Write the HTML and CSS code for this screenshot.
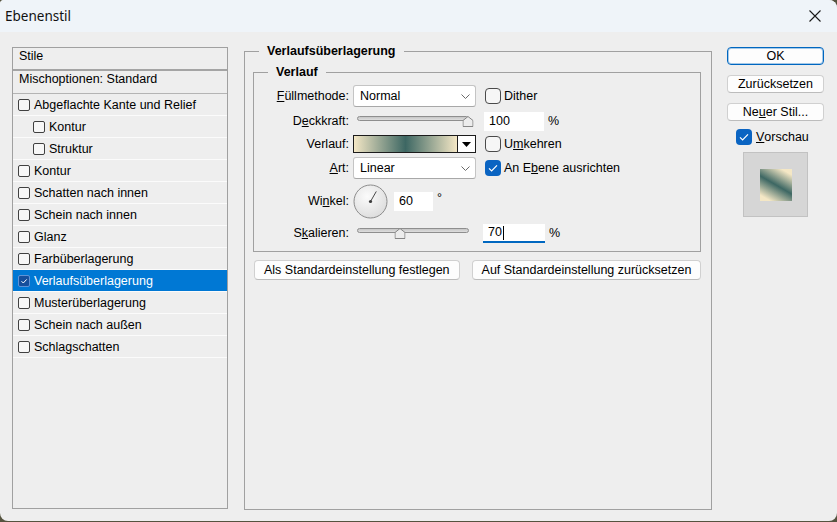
FILE: index.html
```html
<!DOCTYPE html>
<html lang="de">
<head>
<meta charset="UTF-8">
<meta name="viewport" content="width=device-width, initial-scale=1.0">
<title>Ebenenstil</title>
<link rel="stylesheet" href="styles.css">
</head>
<body>

<div class="window">
    <div class="titlebar">
        <span class="title">Ebenenstil</span>
        <svg class="close" width="12" height="12" viewBox="0 0 12 12"><path d="M0.5 0.5L11.5 11.5M11.5 0.5L0.5 11.5" stroke="#1a1a1a" stroke-width="1.1" fill="none"/></svg>
    </div>

    <div class="content">
        <div class="styles">
            <div class="styles-head">Stile</div>
            <div class="styles-blend">Mischoptionen: Standard</div>
            <ul class="styles-list">
                <li><span class="cb"></span>Abgeflachte Kante und Relief</li>
                <li class="sub"><span class="cb"></span>Kontur</li>
                <li class="sub"><span class="cb"></span>Struktur</li>
                <li><span class="cb"></span>Kontur</li>
                <li><span class="cb"></span>Schatten nach innen</li>
                <li><span class="cb"></span>Schein nach innen</li>
                <li><span class="cb"></span>Glanz</li>
                <li><span class="cb"></span>Farbüberlagerung</li>
                <li class="active"><span class="cb"><svg width="10" height="10" viewBox="0 0 10 10"><path d="M2.5 5.2l1.8 1.8 3.4-3.6" stroke="#fff" stroke-width="1" fill="none"/></svg></span>Verlaufsüberlagerung</li>
                <li><span class="cb"></span>Musterüberlagerung</li>
                <li><span class="cb"></span>Schein nach außen</li>
                <li><span class="cb"></span>Schlagschatten</li>
            </ul>
        </div>

        <div class="main">
            <fieldset class="group">
                <legend>Verlaufsüberlagerung</legend>

                <fieldset class="group inner">
                    <legend>Verlauf</legend>
                    <div class="form">
                        <label><u>F</u>üllmethode:</label>
                        <div class="select">Normal
                            <svg class="chevron" width="9" height="5" viewBox="0 0 9 5"><path d="M0.5 0.5L4.5 4.5L8.5 0.5" stroke="#6a6a6a" fill="none"/></svg>
                        </div>
                        <div class="extra"><span class="check"></span>Dither</div>

                        <label>D<u>e</u>ckkraft:</label>
                        <div class="slider">
                            <div class="track"></div>
                            <svg class="thumb" style="left: 99%" width="11" height="11" viewBox="0 0 11 11"><polygon points="0.5,10.5 0.5,4.5 5.5,0.5 10.5,4.5 10.5,10.5" fill="#ececec" stroke="#858585"/></svg>
                        </div>
                        <div class="extra"><span class="field">100</span><span class="unit">%</span></div>

                        <label>Verlauf:</label>
                        <div class="gradient">
                            <div class="gradient-bar"></div>
                            <div class="gradient-drop"><svg width="9" height="5" viewBox="0 0 9 5"><polygon points="0,0 9,0 4.5,5" fill="#000"/></svg></div>
                        </div>
                        <div class="extra"><span class="check"></span>U<u>m</u>kehren</div>

                        <label><u>A</u>rt:</label>
                        <div class="select">Linear
                            <svg class="chevron" width="9" height="5" viewBox="0 0 9 5"><path d="M0.5 0.5L4.5 4.5L8.5 0.5" stroke="#6a6a6a" fill="none"/></svg>
                        </div>
                        <div class="extra"><span class="check on"><svg width="16" height="16" viewBox="0 0 16 16"><path d="M4 8.3l2.6 2.6 5.4-5.6" stroke="#fff" stroke-width="1.2" fill="none"/></svg></span>An E<u>b</u>ene ausrichten</div>

                        <label>Wi<u>n</u>kel:</label>
                        <div class="angle">
                            <svg class="dial" width="35" height="35" viewBox="0 0 35 35">
                                <defs>
                                    <radialGradient id="dialfill" cx="0.4" cy="0.35" r="0.7">
                                        <stop offset="0" stop-color="#fbfbfb"/>
                                        <stop offset="1" stop-color="#dcdcdc"/>
                                    </radialGradient>
                                </defs>
                                <circle cx="17.5" cy="17.5" r="16.5" fill="url(#dialfill)" stroke="#8c8c8c"/>
                                <line x1="17.5" y1="17.5" x2="23.3" y2="7.4" stroke="#4a4a4a" stroke-width="1"/>
                                <circle cx="17.5" cy="17.5" r="1.6" fill="#3c3c3c"/>
                            </svg>
                            <span class="field small">60</span>
                            <span class="degree">°</span>
                        </div>

                        <label>S<u>k</u>alieren:</label>
                        <div class="slider">
                            <div class="track"></div>
                            <svg class="thumb" style="left: 38%" width="11" height="11" viewBox="0 0 11 11"><polygon points="0.5,10.5 0.5,4.5 5.5,0.5 10.5,4.5 10.5,10.5" fill="#ececec" stroke="#858585"/></svg>
                        </div>
                        <div class="extra"><span class="field focus">70<span class="caret"></span></span><span class="unit">%</span></div>
                    </div>
                </fieldset>

                <div class="defaults">
                    <button>Als Standardeinstellung festlegen</button>
                    <button>Auf Standardeinstellung zurücksetzen</button>
                </div>
            </fieldset>
        </div>

        <div class="side">
            <button class="default">OK</button>
            <button>Zurücksetzen</button>
            <button>Ne<u>u</u>er Stil...</button>
            <div class="preview-check"><span class="check on"><svg width="16" height="16" viewBox="0 0 16 16"><path d="M4 8.3l2.6 2.6 5.4-5.6" stroke="#fff" stroke-width="1.2" fill="none"/></svg></span><u>V</u>orschau</div>
            <div class="preview">
                <div class="preview-swatch"></div>
            </div>
        </div>
    </div>
</div>

</body>
</html>
```

FILE: styles.css
```css
html {
    background: #55533f;
}

body {
    margin: 0;
    font-family: "Liberation Sans", Arial, sans-serif;
    font-size: 12.5px;
    color: #000;
}

.window {
    width: 837px;
    height: 521px;
    background: #eeeeee;
    border-radius: 4px 8px 8px 8px;
    overflow: hidden;
    display: flex;
    flex-direction: column;
}

.titlebar {
    height: 32px;
    flex-shrink: 0;
    background: #eff4f9;
    display: flex;
    align-items: center;
    justify-content: space-between;
    padding: 0 16px 0 5px;
}

.title {
    font-family: "Noto Sans", "Open Sans", sans-serif;
    font-size: 13.5px;
    color: #111;
}

.content {
    flex: 1;
    display: flex;
    align-items: stretch;
    padding: 15px 12px 12px;
}

/* left list */

.styles {
    width: 216px;
    box-sizing: border-box;
    border: 1px solid #a0a0a0;
}

.styles-head {
    height: 21px;
    line-height: 16px;
    padding-left: 6px;
    border-bottom: 2px solid #a4a4a4;
}

.styles-blend {
    height: 22px;
    line-height: 16px;
    padding-left: 6px;
    border-bottom: 1px solid #b4b4b4;
}

.styles-list {
    list-style: none;
    margin: 0;
    padding: 0;
}

.styles-list li {
    height: 21px;
    display: flex;
    align-items: center;
    padding-left: 5px;
    border-bottom: 1px solid #fbfbfb;
}

.styles-list li.sub {
    padding-left: 20px;
}

.styles-list li.active {
    background: #0078d4;
    color: #fff;
}

.cb {
    width: 12px;
    height: 12px;
    box-sizing: border-box;
    border: 1px solid #404040;
    border-radius: 2px;
    background: #f7f7f7;
    margin-right: 4px;
    display: flex;
    align-items: center;
    justify-content: center;
}

.active .cb {
    background: #164f9c;
    border-color: #5f93d6;
}

/* middle */

.main {
    width: 468px;
    margin: -3px 0 -1px 16px;
}

.group {
    margin: 0;
    padding: 0 10px 0 8px;
    border: 1px solid #a0a0a0;
    min-inline-size: 0;
}

.main > .group {
    height: 100%;
    box-sizing: border-box;
}

.group legend {
    font-weight: bold;
    line-height: 15px;
    padding: 0 8px;
    margin-left: 6px;
}

.group.inner {
    margin-top: 6px;
    padding: 0;
}

.group.inner legend {
    margin-left: 14px;
}

.form {
    display: grid;
    grid-template-columns: 95px 123px 1fr;
    grid-template-rows: 22px 20px 18px 22px 36px 20px;
    column-gap: 4px;
    row-gap: 4px;
    align-items: center;
    padding: 5px 0 8px;
}

.form label {
    text-align: right;
}

.select {
    height: 22px;
    box-sizing: border-box;
    background: #fff;
    border: 1px solid #c4c4c4;
    border-bottom-color: #a8a8a8;
    border-radius: 3px;
    padding-left: 6px;
    display: flex;
    align-items: center;
}

.chevron {
    margin-left: auto;
    margin-right: 5px;
}

.extra {
    display: flex;
    align-items: center;
    margin-left: 4px;
}

.check {
    width: 16px;
    height: 16px;
    box-sizing: border-box;
    border: 1px solid #4a4a4a;
    border-radius: 4px;
    background: #f6f6f6;
    margin: 0 3px 0 1px;
    display: flex;
}

.check.on {
    border: none;
    background: #0a64c2;
}

.slider {
    position: relative;
    height: 20px;
    margin: 0 7px 0 4px;
}

.track {
    margin-top: 5px;
    height: 5px;
    box-sizing: border-box;
    border: 1px solid #8e8e8e;
    border-radius: 3px;
    background: linear-gradient(#c6c6c6, #dedede);
}

.thumb {
    position: absolute;
    top: 5px;
    transform: translateX(-50%);
}

.field {
    width: 60px;
    height: 19px;
    box-sizing: border-box;
    background: #fff;
    padding-left: 5px;
    line-height: 19px;
    display: flex;
    align-items: center;
}

.field.small {
    width: 39px;
    margin-left: 6px;
}

.field.focus {
    width: 62px;
    margin-left: -1px;
    border-bottom: 2px solid #0067c0;
    line-height: 17px;
    padding-top: 1px;
}

.caret {
    width: 1px;
    height: 14px;
    background: #000;
    margin-left: 1px;
}

.unit {
    margin-left: 4px;
}

.gradient {
    height: 18px;
    box-sizing: border-box;
    border: 1px solid #1c1c1c;
    display: flex;
}

.gradient-bar {
    flex: 1;
    background: linear-gradient(to right, #f4e7c5, #3d6763 50%, #f4e7c5);
    border-right: 1px solid #1c1c1c;
}

.gradient-drop {
    width: 17px;
    background: #fff;
    display: flex;
    align-items: center;
    justify-content: center;
}

.angle {
    display: flex;
    align-items: center;
    grid-column: 2 / 4;
}

.degree {
    margin-left: 4px;
    align-self: flex-start;
    margin-top: 7px;
}

.defaults {
    display: flex;
    gap: 12px;
    margin: 8px 0 0 1px;
}

button {
    font-family: "Liberation Sans", Arial, sans-serif;
    font-size: 12.5px;
    color: #000;
    background: #fdfdfd;
    border: 1px solid #d0d0d0;
    border-bottom-color: #bcbcbc;
    border-radius: 4px;
    height: 20px;
    padding: 0 9px;
    line-height: 18px;
    white-space: nowrap;
    flex-shrink: 0;
}

/* right column */

.side {
    width: 97px;
    margin-left: 15px;
    display: flex;
    flex-direction: column;
}

.side button {
    width: 97px;
    height: 18px;
    line-height: 16px;
    padding: 0;
    margin-bottom: 10px;
}

.side button.default {
    border: 1px solid #0067c0;
    box-shadow: inset 0 0 0 1px rgba(0, 103, 192, 0.35);
}

.preview-check {
    display: flex;
    align-items: center;
    margin: -2px 0 0 8px;
    height: 16px;
}

.preview-check .check {
    margin-right: 4px;
}

.preview {
    width: 65px;
    height: 65px;
    box-sizing: border-box;
    margin: 7px 0 0 16px;
    background: #d6d6d6;
    border: 1px solid #c2c2c2;
    display: flex;
    align-items: center;
    justify-content: center;
}

.preview-swatch {
    width: 32px;
    height: 32px;
    background: linear-gradient(30deg, #f4e7c5 12%, #3d6763 50%, #f4e7c5 88%);
}
```
